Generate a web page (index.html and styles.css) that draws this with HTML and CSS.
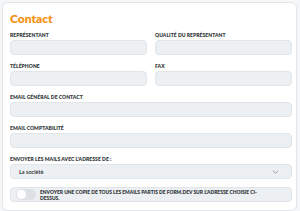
FILE: index.html
```html
<!DOCTYPE html>
<html lang="fr">
<head>
<meta charset="UTF-8" />
<meta name="viewport" content="width=device-width, initial-scale=1" />
<title>Contact</title>
<link rel="stylesheet" href="styles.css">
</head>
<body>

<div class="card">
  <h2>Contact</h2>

  <div class="row">
    <div class="field">
      <label>Représentant</label>
      <input type="text" />
    </div>
    <div class="field">
      <label>Qualité du représentant</label>
      <input type="text" />
    </div>
  </div>

  <div class="row">
    <div class="field">
      <label>Téléphone</label>
      <input type="text" />
    </div>
    <div class="field">
      <label>Fax</label>
      <input type="text" />
    </div>
  </div>

  <div class="field">
    <label>Email général de contact</label>
    <input type="text" />
  </div>

  <div class="field">
    <label>Email comptabilité</label>
    <input type="text" />
  </div>

  <div class="field">
    <label>Envoyer les mails avec l'adresse de :</label>
    <div class="select">
      <span>La société</span>
      <svg width="7" height="4" viewBox="0 0 7 4"><path d="M0.8 0.8 L3.5 3.2 L6.2 0.8" fill="none" stroke="#8a9199" stroke-width="0.8"/></svg>
    </div>
  </div>

  <div class="switch-row">
    <span class="switch"><span class="knob"></span></span>
    <span class="switch-text">Envoyer une copie de tous les emails partis de form.dev sur l'adresse choisie ci-dessus.</span>
  </div>
</div>

</body>
</html>
```

FILE: styles.css
```css
body {
  margin: 0;
  background-color: #f4f6f8;
  font-family: Lato, "Open Sans", sans-serif;
  color: #363b41;
}

.card {
  background-color: white;
  margin: 2px 3px 2px 2px;
  padding: 7px 4px 5px 7px;
  border: 1px solid #e3e6ea;
  border-radius: 6px;
  height: 195px;
}

h2 {
  margin: 1px 0 5px 0;
  font-size: 12px;
  line-height: 16px;
  color: #f39318;
  font-weight: 800;
}

.row {
  display: flex;
  gap: 8px;
}

.row .field {
  flex: 1;
}

.field {
  margin-bottom: 8px;
}

label {
  display: block;
  font-size: 5px;
  line-height: 6px;
  font-weight: 800;
  text-transform: uppercase;
  margin-bottom: 2px;
  letter-spacing: 0.05px;
}

input {
  display: block;
  box-sizing: border-box;
  width: 100%;
  height: 15px;
  margin: 0;
  background-color: #edf0f3;
  border: 1px solid #e1e5e9;
  border-radius: 4px;
}

.select {
  box-sizing: border-box;
  height: 15px;
  background-color: #edf0f3;
  border: 1px solid #e1e5e9;
  border-radius: 4px;
  display: flex;
  align-items: center;
  justify-content: space-between;
  padding: 0 12px 0 8px;
  font-size: 5.5px;
  font-weight: 700;
}

.switch-row {
  box-sizing: border-box;
  height: 15px;
  margin-top: 1px;
  background-color: #edf0f3;
  border: 1px solid #e1e5e9;
  border-radius: 4px;
  display: flex;
  align-items: center;
  padding: 0 6px 0 5px;
  gap: 4px;
}

.switch {
  width: 20px;
  height: 11px;
  border-radius: 6px;
  background-color: #dde1e6;
  position: relative;
  flex-shrink: 0;
}

.knob {
  position: absolute;
  top: 1px;
  left: 1px;
  width: 9px;
  height: 9px;
  border-radius: 50%;
  background-color: white;
}

.switch-text {
  max-width: 224px;
  font-size: 4.9px;
  line-height: 6px;
  font-weight: 800;
  text-transform: uppercase;
}
```
